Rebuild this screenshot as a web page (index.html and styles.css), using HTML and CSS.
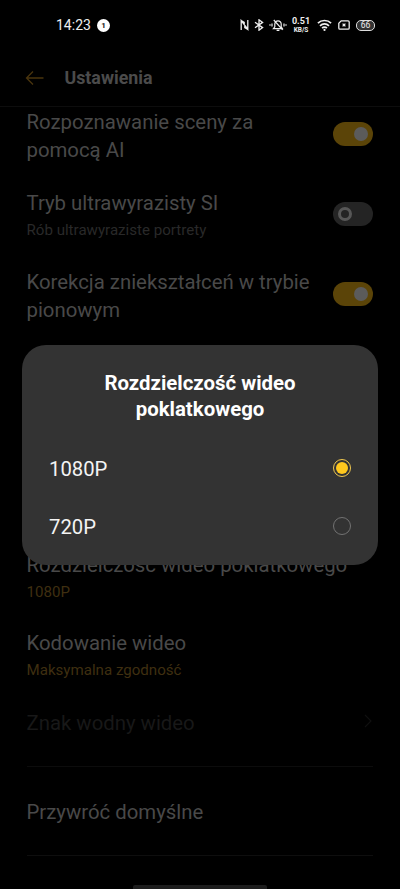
FILE: index.html
```html
<!DOCTYPE html>
<html lang="pl">
<head>
<meta charset="utf-8">
<title>Ustawienia</title>
<link rel="stylesheet" href="styles.css">
</head>
<body>
<div class="screen">
  <div class="status">
    <span class="clock">14:23</span>
    <span class="count">1</span>
    <div class="tray">
      <svg class="nfc" width="9" height="12" viewBox="0 0 9 12"><path d="M1.2 11V1.6L7.8 10.2V1M1.2 1.6L4.2 3.4V6M7.8 10.4L4.8 8.6V6" /></svg>
      <svg class="bt" width="10" height="12" viewBox="0 0 10 12"><path d="M1 3.2L8.6 8.6L5 11.2V.8L8.6 3.4L1 8.8" /></svg>
      <svg class="bell" width="18" height="12" viewBox="0 0 18 12"><path d="M4.4 9.6H13.4L12.2 7.8V5A3.2 3.2 0 0 0 5.8 5V7.8ZM7.6 11.3H10.4M4.8 1L13.6 10.8M3 4.5V7.5M1 5.2V6.8M15 4.5V7.5M17 5.2V6.8" /></svg>
      <div class="speed"><span class="rate">0.51</span><span class="unit">KB/S</span></div>
      <svg class="wifi" width="15" height="12" viewBox="0 0 15 12"><path d="M.9 4.2A9.4 9.4 0 0 1 14.1 4.2M3 6.8A6.4 6.4 0 0 1 12 6.8M5.1 9.2A3.4 3.4 0 0 1 9.9 9.2" /><circle cx="7.5" cy="10.9" r="1.1" /></svg>
      <svg class="sim" width="12" height="10" viewBox="0 0 12 10"><path d="M3.2.8H10A1.2 1.2 0 0 1 11.2 2V8A1.2 1.2 0 0 1 10 9.2H2A1.2 1.2 0 0 1 .8 8V3.2ZM4.6 3.6L7.4 6.4M7.4 3.6L4.6 6.4" /></svg>
      <div class="battery"><span>66</span></div>
    </div>
  </div>
  <div class="header">
    <svg width="20" height="16" viewBox="0 0 20 16"><path d="M18.5 8H1.5M8 1.5L1.5 8L8 14.5" /></svg>
    <h1>Ustawienia</h1>
  </div>
  <div class="list">
    <div class="row switchable"><div class="label two">Rozpoznawanie sceny za pomocą AI</div><div class="toggle on"><i></i></div></div>
    <div class="row switchable"><div class="label">Tryb ultrawyrazisty SI<small>Rób ultrawyraziste portrety</small></div><div class="toggle"><i></i></div></div>
    <div class="row switchable"><div class="label two">Korekcja zniekształceń w trybie pionowym</div><div class="toggle on"><i></i></div></div>
    <div class="covered"></div>
    <div class="row value"><div class="label">Rozdzielczość wideo poklatkowego<small class="gold">1080P</small></div></div>
    <div class="row value"><div class="label">Kodowanie wideo<small class="gold">Maksymalna zgodność</small></div></div>
    <div class="row mark"><div class="label">Znak wodny wideo</div><svg width="10" height="14" viewBox="0 0 10 14"><path d="M2 1L8 7L2 13" /></svg></div>
    <div class="row reset"><div class="label">Przywróć domyślne</div></div>
  </div>
  <div class="home"></div>
  <div class="dialog">
    <h2>Rozdzielczość wideo<br>poklatkowego</h2>
    <div class="option"><span>1080P</span><i class="radio checked"></i></div>
    <div class="option"><span>720P</span><i class="radio"></i></div>
  </div>
</div>
</body>
</html>
```
FILE: styles.css
```css
* { box-sizing: border-box; }
body { margin: 0; background: #000; font-family: Roboto, "Noto Sans", sans-serif; }
svg { display: block; flex: none; fill: none; }
.screen { position: relative; display: flex; flex-direction: column; width: 400px; height: 889px; overflow: hidden; background: #000; }

.status { display: flex; align-items: center; height: 50px; padding: 0 25px 0 56px; color: #eee; }
.clock { width: 41px; font-size: 14px; }
.count { width: 13px; height: 13px; border-radius: 50%; background: #fff; color: #111; font-size: 8px; font-weight: 700; line-height: 13px; text-align: center; }
.tray { display: flex; align-items: center; margin-left: auto; }
.tray svg { stroke: #eee; stroke-width: 1.3; }
.bt { margin-left: 5px; }
.bell { margin-left: 5px; }
.tray .bell { stroke-width: 1.2; }
.speed { display: flex; flex-direction: column; align-items: center; width: 18px; margin-left: 5px; font-weight: 700; }
.rate { font-size: 9px; line-height: 11px; margin-top: 0; }
.unit { font-size: 6.5px; line-height: 8px; margin-top: -1px; }
.wifi { margin-left: 7px; }
.tray .wifi { stroke-width: 1.7; }
.wifi circle { fill: #eee; stroke: none; }
.sim { margin-left: 6px; }
.battery { display: flex; align-items: center; justify-content: center; width: 19px; height: 11px; margin-left: 6px; border: 1px solid #ddd; border-radius: 5px; background: #333; font-size: 8.5px; line-height: 9px; }

.header { display: flex; align-items: center; gap: 19.5px; height: 57px; padding: 0 25px; border-bottom: 1px solid #0d0d0d; }
.header svg { stroke: #49340d; stroke-width: 1.3; }
h1 { margin: 0; color: #4b4b4b; font-size: 17.8px; font-weight: 700; line-height: 24px; }

.list { display: flex; flex-direction: column; margin-top: -13px; padding: 0 27px 0 26.5px; }
.row { display: flex; justify-content: space-between; }
.label { color: #494949; font-size: 20.35px; line-height: 28px; }
.label.two { width: 290px; padding-top: 3px; }
.label small { display: block; color: #292929; font-size: 15.1px; line-height: 20px; margin-top: 3px; }
.label small.gold { color: #3f2f10; }
.switchable { height: 80px; align-items: center; }
.toggle { display: flex; align-items: center; justify-content: flex-start; flex: none; width: 40px; height: 24px; padding: 0 5px; border-radius: 12px; background: #242424; }
.toggle i { width: 14px; height: 14px; border: 3px solid #575757; border-radius: 50%; }
.toggle.on { justify-content: flex-end; background: #5b4408; }
.toggle.on i { border: 0; background: #5b5b5b; }
.covered { height: 217px; }
.value { height: 78px; }
.mark { height: 58px; margin-top: 2px; border-bottom: 1px solid #0c0c0c; }
.mark .label { color: #181818; }
.mark svg { margin-top: 5px; stroke: #101010; stroke-width: 1.1; }
.reset { height: 89px; padding-top: 31px; border-bottom: 1px solid #0e0e0e; }

.home { position: absolute; bottom: 0; left: 133px; width: 134px; height: 4px; border-radius: 2px 2px 0 0; background: #1d1d1d; }

.dialog { position: absolute; top: 345px; left: 22px; width: 356px; height: 220px; padding: 25px 27px 0; border-radius: 24px; background: #333; }
h2 { margin: 0 0 18px; color: #fff; font-size: 20.4px; font-weight: 700; line-height: 26px; text-align: center; }
.option { display: flex; align-items: center; justify-content: space-between; height: 58px; color: #f4f4f4; font-size: 20.3px; }
.radio { width: 18px; height: 18px; margin-bottom: 2px; border: 1.5px solid #727272; border-radius: 50%; }
.radio.checked { padding: 2px; border-color: #f0c850; background: #ffc81e content-box; }
```
